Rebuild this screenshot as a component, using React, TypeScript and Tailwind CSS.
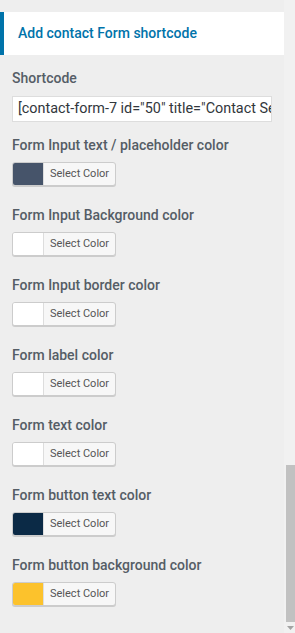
import React from 'react';

const colorFields = [
  { label: 'Form Input text / placeholder color', color: 'bg-[#46546a]' },
  { label: 'Form Input Background color', color: 'bg-white' },
  { label: 'Form Input border color', color: 'bg-white' },
  { label: 'Form label color', color: 'bg-white' },
  { label: 'Form text color', color: 'bg-white' },
  { label: 'Form button text color', color: 'bg-[#0b2a46]' },
  { label: 'Form button background color', color: 'bg-[#fcc22c]' },
];

const ColorButton = ({ color }: { color: string }) => (
  <div className="flex h-6 w-[104px] overflow-hidden rounded-[3px] border border-[#cccccc] bg-[#f7f7f7] shadow-[0_1px_0_#cccccc]">
    <span className={`w-[31px] border-r border-[#dddddd] ${color}`}></span>
    <span className="flex flex-1 items-center pl-[6px] text-[11px] text-[#555555]">Select Color</span>
  </div>
);

export default function App() {
  return (
    <div className="flex h-[633px] w-[295px] overflow-hidden bg-[#eeeeee] font-['Roboto',sans-serif]">
      <div className="flex-1">
        <div className="mt-[12px] flex h-[43px] items-center border-l-4 border-[#0073aa] bg-white pl-[14px]">
          <h3 className="text-[14px] font-medium text-[#0073aa]">Add contact Form shortcode</h3>
        </div>

        <div className="px-3 pt-[13px]">
          <label className="block text-[14px] font-medium leading-5 text-[#555d66]">Shortcode</label>
          <div className="mt-2 flex h-[26px] w-[260px] items-center overflow-hidden whitespace-nowrap border border-[#dddddd] bg-white pl-[5px] text-[14.4px] text-[#32373c]">
            [contact-form-7 id="50" title="Contact Se
          </div>

          <div className="mt-[13px] flex flex-col gap-[19px]">
            {colorFields.map((f) => (
              <div key={f.label}>
                <label className="block text-[14px] font-medium leading-5 text-[#555d66]">{f.label}</label>
                <div className="mt-[7px]">
                  <ColorButton color={f.color} />
                </div>
              </div>
            ))}
          </div>
        </div>
      </div>

      <div className="flex w-[11px] flex-col bg-[#f1f1f1]">
        <div className="flex-1"></div>
        <div className="ml-[2px] h-[157px] bg-[#c1c1c1]"></div>
        <div className="flex h-[11px] items-center justify-center pl-[2px]">
          <svg width="7" height="4" viewBox="0 0 7 4">
            <polygon points="0,0 7,0 3.5,4" fill="#a3a3a3" />
          </svg>
        </div>
      </div>
    </div>
  );
}
